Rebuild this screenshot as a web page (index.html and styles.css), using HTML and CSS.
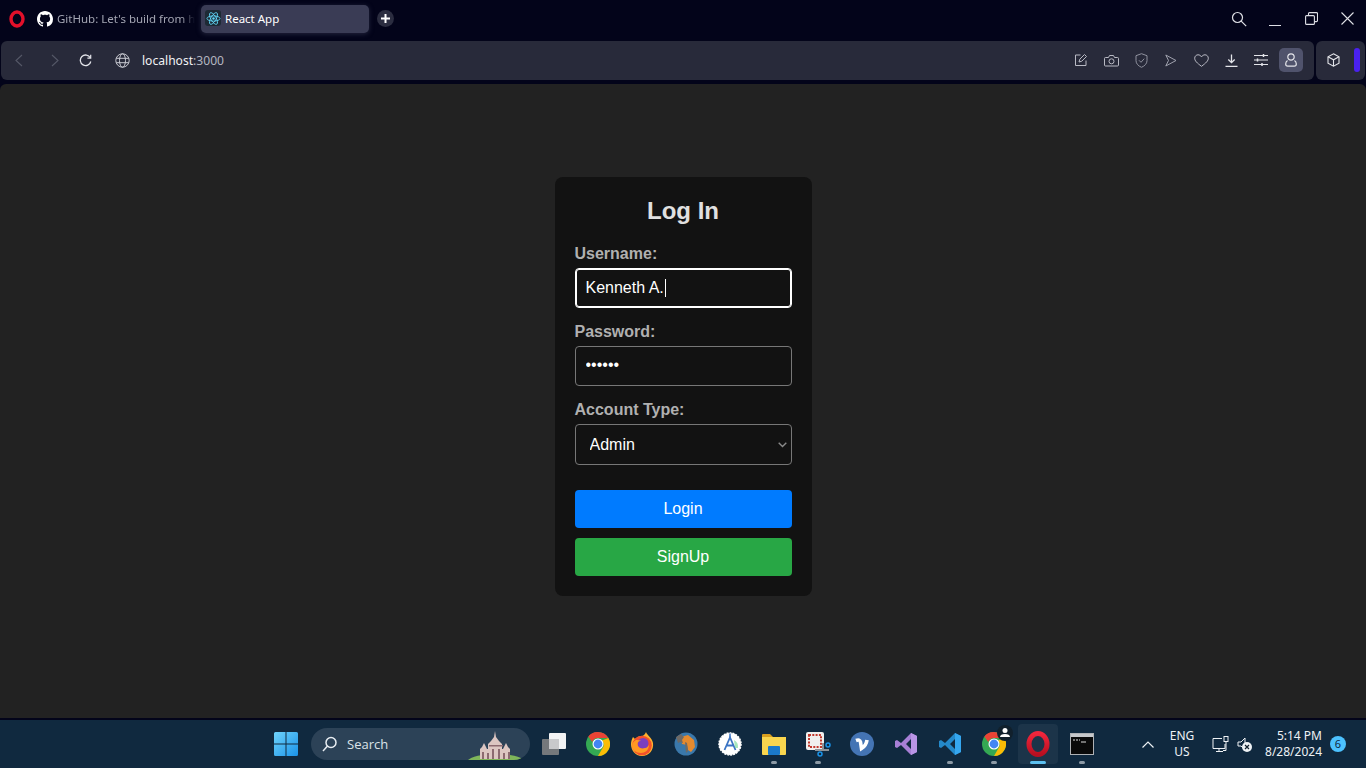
FILE: index.html
```html
<!DOCTYPE html>
<html lang="en">
<head>
  <meta charset="UTF-8">
  <meta name="viewport" content="width=device-width, initial-scale=1.0">
  <link rel="stylesheet" href="styles.css">
  <title>React App</title>
</head>
<body>
  <!-- browser tabs -->
  <div class="tabstrip">
    <svg class="opera-logo" width="18" height="18" viewBox="0 0 18 18"><ellipse cx="9" cy="9" rx="6" ry="7" fill="none" stroke="#e3102a" stroke-width="3.4"/></svg>
    <div class="tab tab-idle">
      <svg class="tab-icon" width="16" height="16" viewBox="0 0 16 16"><path fill="#fff" d="M8 0C3.58 0 0 3.58 0 8c0 3.54 2.29 6.53 5.47 7.59.4.07.55-.17.55-.38 0-.19-.01-.82-.01-1.49-2.01.37-2.53-.49-2.69-.94-.09-.23-.48-.94-.82-1.13-.28-.15-.68-.52-.01-.53.63-.01 1.08.58 1.23.82.72 1.21 1.87.87 2.33.66.07-.52.28-.87.51-1.07-1.78-.2-3.64-.89-3.64-3.95 0-.87.31-1.59.82-2.15-.08-.2-.36-1.02.08-2.12 0 0 .67-.21 2.2.82.64-.18 1.32-.27 2-.27s1.36.09 2 .27c1.53-1.04 2.2-.82 2.2-.82.44 1.1.16 1.92.08 2.12.51.56.82 1.27.82 2.15 0 3.07-1.87 3.75-3.65 3.95.29.25.54.73.54 1.48 0 1.07-.01 1.93-.01 2.2 0 .21.15.46.55.38A8.01 8.01 0 0 0 16 8c0-4.42-3.58-8-8-8z"/></svg>
      <span class="tab-title">GitHub: Let's build from he</span>
    </div>
    <div class="tab tab-active">
      <span class="tab-favicon">
        <svg width="15" height="15" viewBox="0 0 16 16" fill="none" stroke="#61dafb" stroke-width=".9"><circle cx="8" cy="8" r="1.3" fill="#61dafb" stroke="none"/><ellipse cx="8" cy="8" rx="7" ry="2.8"/><ellipse cx="8" cy="8" rx="7" ry="2.8" transform="rotate(60 8 8)"/><ellipse cx="8" cy="8" rx="7" ry="2.8" transform="rotate(120 8 8)"/></svg>
      </span>
      <span>React App</span>
    </div>
    <div class="new-tab">
      <svg width="9" height="9" viewBox="0 0 9 9"><path d="M4.5 0v9M0 4.5h9" stroke="#fff" stroke-width="2"/></svg>
    </div>
    <div class="window-btns">
      <span><svg width="16" height="16" viewBox="0 0 16 16" fill="none" stroke="#dfe0e6" stroke-width="1.2"><circle cx="6.5" cy="6.5" r="5"/><path d="M10.2 10.2l5 5"/></svg></span>
      <span><svg width="12" height="16" viewBox="0 0 12 16" stroke="#dfe0e6"><path d="M0 14.5h12"/></svg></span>
      <span><svg width="13" height="13" viewBox="0 0 13 13" fill="none" stroke="#dfe0e6" stroke-width="1.1"><rect x=".6" y="3.6" width="8.8" height="8.8" rx="1"/><path d="M3.5 3.5V1.6a1 1 0 0 1 1-1h7a1 1 0 0 1 1 1v7a1 1 0 0 1-1 1H9.500"/></svg></span>
      <span><svg width="13" height="13" viewBox="0 0 13 13" stroke="#dfe0e6" stroke-width="1.1"><path d="M.5.5l12 12M12.500.5l-12 12"/></svg></span>
    </div>
  </div>

  <!-- address bar -->
  <div class="toolbar">
    <div class="toolbar-main">
      <svg class="nav-back" width="9" height="13" viewBox="0 0 9 13" fill="none" stroke="#555867" stroke-width="1.1"><path d="M8 1L2 6.5 8 12"/></svg>
      <svg class="nav-forward" width="9" height="13" viewBox="0 0 9 13" fill="none" stroke="#555867" stroke-width="1.1"><path d="M1 1l6 5.500L1 12"/></svg>
      <svg class="nav-reload" width="13" height="13" viewBox="0 0 13 13" fill="none" stroke="#e4e5ea" stroke-width="1.3"><path d="M11.300 3.800A5.300 5.300 0 1 0 11.800 7.500"/><path d="M11.700 .8v3.300H8.400" stroke-width="1.200"/></svg>
      <svg class="nav-globe" width="15" height="15" viewBox="0 0 15 15" fill="none" stroke="#c9cad2" stroke-width="1"><circle cx="7.500" cy="7.500" r="6.700"/><ellipse cx="7.500" cy="7.500" rx="3" ry="6.700"/><path d="M1.300 5.300h12.400M1.300 9.700h12.400"/></svg>
      <span class="url">localhost<span class="url-port">:3000</span></span>
      <div class="toolbar-icons">
        <span class="tool"><svg width="14" height="14" viewBox="0 0 14 14" fill="none" stroke="#b9bac4"><path d="M6.500 2H1.500v10.500H12V7.500"/><path d="M5 9l.8-2.800L10.500 1.500l2 2L7.800 8.200z"/></svg></span>
        <span class="tool"><svg width="15" height="13" viewBox="0 0 15 13" fill="none" stroke="#b9bac4"><path d="M1.500 3.500h3L5.500 1.500h4l1 2h3a1 1 0 0 1 1 1v6.500a1 1 0 0 1-1 1h-12a1 1 0 0 1-1-1V4.500a1 1 0 0 1 1-1z"/><circle cx="7.500" cy="7.300" r="2.500"/></svg></span>
        <span class="tool"><svg width="13" height="15" viewBox="0 0 13 15" fill="none" stroke="#8f919e"><path d="M6.500 .7l5.500 2v5c0 3-2.400 5.300-5.500 6.600C3.400 13 1 10.700 1 7.700v-5z"/><path d="M4 7.300l2 2 3.200-3.600"/></svg></span>
        <span class="tool"><svg width="12" height="13" viewBox="0 0 12 13" fill="none" stroke="#a0a2ae"><path d="M.8 1L11 6.500.8 12l2.700-5.500z"/></svg></span>
        <span class="tool"><svg width="15" height="13" viewBox="0 0 15 13" fill="none" stroke="#b9bac4"><path d="M7.500 12.300C3 9 .7 6.800 .7 4.200 .7 2.200 2.300 .8 4 .8c1.500 0 2.700.8 3.500 2C8.300 1.600 9.500.8 11 .8c1.700 0 3.300 1.400 3.300 3.400 0 2.600-2.300 4.800-6.800 8.100z"/></svg></span>
        <span class="tool"><svg width="13" height="13" viewBox="0 0 13 13" fill="none" stroke="#e4e5ea" stroke-width="1.300"><path d="M6.500 .5v8M3.300 5.500l3.200 3.200 3.200-3.200M.5 12.300h12"/></svg></span>
        <span class="tool"><svg width="14" height="12" viewBox="0 0 14 12" stroke="#e4e5ea"><path d="M0 1.500h14M0 6h14M0 10.500h14"/><path d="M9.500 0v3M3.500 4.500v3M8 9v3" stroke-width="1.500"/></svg></span>
        <span class="tool-profile"><svg width="12" height="14" viewBox="0 0 12 14" fill="none" stroke="#e4e5ea" stroke-width="1.200"><circle cx="6" cy="4" r="3.200"/><path d="M2.500 7.500C1.300 8.300.7 9.500.7 11c0 1.300.8 2.200 2 2.200h6.600c1.200 0 2-.9 2-2.200 0-1.500-.6-2.700-1.800-3.500"/></svg></span>
      </div>
    </div>
    <div class="toolbar-side">
      <svg width="13" height="14" viewBox="0 0 13 14" fill="none" stroke="#e4e5ea" stroke-width="1.100"><path d="M6.500 .8l5.500 3v6.400l-5.500 3-5.500-3V3.800z"/><path d="M1 3.800l5.500 3 5.500-3M6.500 6.800v6.400"/></svg>
      <span class="side-accent"></span>
    </div>
  </div>

  <!-- page content -->
  <main class="page">
    <form class="login-card">
      <h2>Log In</h2>
      <div class="form-group">
        <label for="username">Username:</label>
        <div class="input-wrap">
          <input class="field field-focus" id="username" type="text" value="Kenneth A.">
          <span class="caret"></span>
        </div>
      </div>
      <div class="form-group">
        <label for="password">Password:</label>
        <input class="field field-password" id="password" type="password" value="secret">
      </div>
      <div class="form-group">
        <label for="accountType">Account Type:</label>
        <div class="input-wrap">
          <select class="field field-select" id="accountType">
            <option>Admin</option>
            <option>User</option>
          </select>
          <svg class="select-arrow" width="9" height="6" viewBox="0 0 9 6" fill="none" stroke="#8a8a8a" stroke-width="1.400"><path d="M.7 .8l3.800 3.800L8.300 .8"/></svg>
        </div>
      </div>
      <button class="btn btn-login" type="button">Login</button>
      <button class="btn btn-signup" type="button">SignUp</button>
    </form>
  </main>

  <!-- windows taskbar -->
  <footer class="taskbar">
    <div class="task-apps">
      <span class="task-item">
        <svg width="24" height="24" viewBox="0 0 24 24"><defs><linearGradient id="win" x1="0" y1="0" x2="1" y2="1"><stop offset="0" stop-color="#6fd3fb"/><stop offset="1" stop-color="#1a92e8"/></linearGradient></defs><path fill="url(#win)" d="M0 1.500A1.500 1.500 0 0 1 1.500 0h10v11.500H0zM12.500 0h10A1.500 1.500 0 0 1 24 1.500v10H12.500zM0 12.500h11.500V24h-10A1.500 1.500 0 0 1 0 22.500zM12.500 12.500H24v10a1.500 1.500 0 0 1-1.500 1.500h-10z"/></svg>
      </span>
      <div class="task-search">
        <svg width="15" height="16" viewBox="0 0 15 16" fill="none" stroke="#e8edf2" stroke-width="1.500"><circle cx="9" cy="6.500" r="5"/><path d="M5.500 10L1 15"/></svg>
        <span>Search</span>
        <svg class="search-art" width="56" height="30" viewBox="0 0 56 30"><path fill="#7fb65a" d="M0 30c4-3 8-4 14-5h28c6 1 10 2 14 5z"/><path fill="#dcc6c2" d="M12 29V19l2-2 2-4 2 4 1 2h1v-5l3-3 3-4 1-6 1 6 3 4 3 3v5h1l1-2 2-4 2 4 2 2v10z"/><path fill="#8c6a70" d="M14 29v-7h2v7zM19 29v-6h2v6zM24 29v-10h2v10zM30 29v-10h2v10zM35 29v-6h2v6zM40 29v-7h2v7zM21 15h14v1.500H21z"/></svg>
      </div>
      <span class="task-item">
        <svg width="26" height="24" viewBox="0 0 26 24"><rect x="8" y="1" width="17" height="16" rx="1" fill="#f2f3f4"/><rect x="1" y="7" width="17" height="16" rx="1" fill="#7b7c7e" opacity=".95"/><rect x="8" y="7" width="10" height="10" fill="#c8c9cb"/></svg>
      </span>
      <span class="task-item">
        <svg width="24" height="24" viewBox="0 0 24 24"><circle cx="12" cy="12" r="12" fill="#34a853"/><path fill="#ea4335" d="M12 0a12 12 0 0 1 10.400 6H12a6 6 0 0 0-5.700 4.100L2.300 4.400A12 12 0 0 1 12 0z"/><path fill="#fbbc05" d="M22.400 6A12 12 0 0 1 12 24l5.200-9A6 6 0 0 0 16 8.500z"/><circle cx="12" cy="12" r="5.500" fill="#fff"/><circle cx="12" cy="12" r="4.400" fill="#4285f4"/></svg>
      </span>
      <span class="task-item">
        <svg width="24" height="24" viewBox="0 0 24 24"><path fill="#ffb02e" d="M16 0c1 3 6 6 7 11 1 7-4 13-11 13S1 18 1 12c0-3 1-5 2-7l2 2c2-2 4-3 6-3 3 0 4-2 5-4z"/><circle cx="12" cy="13.500" r="9.800" fill="#f4502b"/><circle cx="13" cy="11.500" r="5.500" fill="#7b3fbf"/><path fill="#ff9a22" d="M2 14c0-3 2-5 4-6 2 0 4 0 5 1-3 0-4 2-3 5 1 2 4 3 7 2 2 0 3-2 4-3 0 5-4 8-8 8-5 0-9-3-9-7z"/></svg>
      </span>
      <span class="task-item">
        <svg width="24" height="24" viewBox="0 0 24 24"><circle cx="12" cy="12" r="11.500" fill="#3a78ab"/><path fill="#e58a2e" d="M7 5l7-2 6 5 1 7-4 5-3-2-1-5-5-1z"/><path fill="#6e6a66" d="M2 5l5-3 3 3-2 3 1 3-3-1-2 1zM11 10l2 1 1 8-2 2z"/></svg>
      </span>
      <span class="task-item">
        <svg width="24" height="24" viewBox="0 0 24 24"><circle cx="12" cy="12" r="11" fill="#fff" stroke="#fff" stroke-width="1.500" stroke-dasharray="2 1"/><path d="M12 1.500v4" stroke="#3b74c4" stroke-width="1.500"/><path fill="none" stroke="#3b74c4" stroke-width="1.800" d="M6.500 18L12 5.500 17.500 18M8.500 13.500h7"/><path fill="#7fdca0" opacity=".7" d="M16 8a8 8 0 0 1 4 8h-3z"/></svg>
      </span>
      <span class="task-item task-open">
        <svg width="26" height="24" viewBox="0 0 26 24"><path fill="#d99f1f" d="M1 3a1 1 0 0 1 1-1h7l3 3h-11z"/><path fill="#f9d54e" d="M1 5h24v17a1 1 0 0 1-1 1H2a1 1 0 0 1-1-1z"/><rect x="7" y="14" width="12" height="9" rx="1" fill="#1b79c9"/></svg>
      </span>
      <span class="task-item task-open">
        <svg width="26" height="26" viewBox="0 0 26 26"><rect x="1" y="1" width="18" height="18" rx="2" fill="#f0efee"/><rect x="4" y="4" width="12" height="12" fill="none" stroke="#c2382c" stroke-width="2" stroke-dasharray="2 1.300"/><path d="M10 19h14M18 12l0 7" stroke="#8f9296" stroke-width="2"/><circle cx="23" cy="14" r="2" fill="none" stroke="#1a92e8" stroke-width="1.500"/><circle cx="15" cy="23" r="2" fill="none" stroke="#1a92e8" stroke-width="1.500"/></svg>
      </span>
      <span class="task-item">
        <svg width="24" height="24" viewBox="0 0 24 24"><circle cx="12" cy="12" r="12" fill="#4474b4"/><path d="M6 8.500c2.500-1 4-.5 4.500 1.500l1 6.500c2.500-1.500 5-5 5.500-8.500" fill="none" stroke="#fff" stroke-width="3.600"/></svg>
      </span>
      <span class="task-item">
        <svg width="24" height="24" viewBox="0 0 24 24"><path fill="#a77fd6" d="M17 1l6 3v16l-6 3-10-10-4 3-2-1V9l2-1 4 3zM17 7l-5 5 5 5z"/><path fill="#b995e6" d="M17 1l6 3v16l-6 3z"/></svg>
      </span>
      <span class="task-item task-open">
        <svg width="24" height="24" viewBox="0 0 24 24"><path fill="#2489ca" d="M17 1l6 3v16l-6 3-10-10-4 3-2-1V9l2-1 4 3zM17 7l-5 5 5 5z"/><path fill="#35a7f0" d="M17 1l6 3v16l-6 3z"/></svg>
      </span>
      <span class="task-item task-open">
        <svg width="24" height="24" viewBox="0 0 24 24"><circle cx="12" cy="12" r="12" fill="#34a853"/><path fill="#ea4335" d="M12 0a12 12 0 0 1 10.400 6H12a6 6 0 0 0-5.700 4.100L2.300 4.400A12 12 0 0 1 12 0z"/><path fill="#fbbc05" d="M22.400 6A12 12 0 0 1 12 24l5.200-9A6 6 0 0 0 16 8.500z"/><circle cx="12" cy="12" r="5.500" fill="#fff"/><circle cx="12" cy="12" r="4.400" fill="#4285f4"/></svg>
        <svg class="profile-badge" width="16" height="16" viewBox="0 0 16 16"><circle cx="8" cy="8" r="8" fill="#11202c"/><circle cx="8" cy="5.500" r="2.500" fill="#fff"/><path fill="#fff" d="M3 12c0-2 2-3 5-3s5 1 5 3z"/></svg>
      </span>
      <span class="task-item task-current">
        <svg width="24" height="26" viewBox="0 0 24 26"><defs><linearGradient id="opera" x1="0" y1="0" x2="0" y2="1"><stop offset="0" stop-color="#f0263c"/><stop offset="1" stop-color="#b80f20"/></linearGradient></defs><ellipse cx="12" cy="13" rx="9" ry="10.500" fill="none" stroke="url(#opera)" stroke-width="5"/></svg>
      </span>
      <span class="task-item task-open">
        <svg width="24" height="22" viewBox="0 0 24 22"><rect x=".5" y=".5" width="23" height="21" fill="#0a0a0a" stroke="#aeb1b5"/><rect x="1" y="1" width="22" height="3" fill="#c6c8cb"/><path d="M3 7h2M6 7h2M9 7h1M11 9h5" stroke="#dcdcdc"/></svg>
      </span>
    </div>
    <div class="tray">
      <svg class="tray-chevron" width="12" height="7" viewBox="0 0 12 7" fill="none" stroke="#eef2f5" stroke-width="1.200"><path d="M.5 6.500L6 1l5.500 5.500"/></svg>
      <div class="tray-lang">ENG<br>US</div>
      <svg class="tray-net" width="17" height="17" viewBox="0 0 17 17" fill="none" stroke="#eef2f5"><path d="M10 2.500H1v10h12V8M4 15.500h7M7 12.500v3"/><rect x="12" y=".5" width="4" height="5"/><path d="M14 5.500v9h-3"/></svg>
      <svg class="tray-sound" width="15" height="15" viewBox="0 0 15 15"><path fill="none" stroke="#eef2f5" d="M1 5h3l4-4v6M1 5v4h3l2 2"/><circle cx="10" cy="10" r="5" fill="#eef2f5"/><path d="M8 8l4 4M12 8l-4 4" stroke="#11202c" stroke-width="1.200"/></svg>
      <div class="tray-clock">5:14 PM<br>8/28/2024</div>
      <span class="tray-badge">6</span>
    </div>
  </footer>
</body>
</html>
```

FILE: styles.css
```css
* {
  box-sizing: border-box;
}

html,
body {
  height: 100%;
}

body {
  margin: 0;
  height: 768px;
  overflow: hidden;
  display: flex;
  flex-direction: column;
  background-color: #03041a;
  font-family: 'Noto Sans', sans-serif;
  color: #fff;
}

/* tabs */
.tabstrip {
  height: 37px;
  display: flex;
  align-items: center;
  flex-shrink: 0;
  background-color: #03041a;
}

.opera-logo {
  margin-left: 8px;
}

.tab {
  display: flex;
  align-items: center;
  font-size: 11.5px;
}

.tab-idle {
  width: 158px;
  margin-left: 11px;
  gap: 4px;
  color: #a3a5b2;
  white-space: nowrap;
}

.tab-icon {
  flex-shrink: 0;
}

.tab-title {
  -webkit-mask-image: linear-gradient(to right, #000 124px, transparent 138px);
  mask-image: linear-gradient(to right, #000 124px, transparent 138px);
}

.tab-active {
  width: 168px;
  height: 28px;
  margin-left: 6px;
  margin-top: 1px;
  padding-left: 4px;
  padding-bottom: 2px;
  gap: 4px;
  border-radius: 5px;
  background-color: #3a3c55;
  box-shadow: 0 1px 5px rgba(70, 72, 100, 0.5);
  color: #fff;
}

.tab-favicon {
  width: 16px;
  height: 16px;
  display: flex;
  align-items: center;
  justify-content: center;
  background-color: #1d2a35;
  border-radius: 3px;
}

.new-tab {
  width: 17px;
  height: 17px;
  margin-left: 8px;
  display: flex;
  align-items: center;
  justify-content: center;
  border-radius: 50%;
  background-color: #2b2d40;
}

.window-btns {
  margin-left: auto;
  margin-right: 1px;
  display: flex;
  align-items: center;
}

.window-btns span {
  width: 36px;
  display: flex;
  justify-content: center;
}

/* address bar */
.toolbar {
  height: 39px;
  margin-top: 4px;
  display: flex;
  flex-shrink: 0;
  gap: 2px;
  padding: 0 1px;
}

.toolbar-main {
  flex: 1;
  display: flex;
  align-items: center;
  padding-left: 13px;
  padding-bottom: 1px;
  border-radius: 6px;
  background-color: #282a3a;
}

.nav-forward {
  margin-left: 28px;
}

.nav-reload {
  margin-left: 19px;
}

.nav-globe {
  margin-left: 23px;
}

.url {
  margin-left: 12px;
  font-size: 12.1px;
  color: #f2f2f5;
}

.url-port {
  color: #b4b6c1;
}

.toolbar-icons {
  margin-left: auto;
  margin-right: 11px;
  display: flex;
  align-items: center;
}

.tool {
  width: 30px;
  display: flex;
  justify-content: center;
}

.tool-profile {
  width: 24px;
  height: 24px;
  margin-left: 3px;
  display: flex;
  align-items: center;
  justify-content: center;
  border-radius: 5px;
  background-color: #50536c;
}

.toolbar-side {
  width: 49px;
  display: flex;
  align-items: center;
  padding-left: 11px;
  padding-bottom: 1px;
  gap: 14px;
  border-radius: 6px;
  background-color: #282a3a;
}

.side-accent {
  width: 6px;
  height: 24px;
  border-radius: 3px;
  background-color: #4a21f0;
}

/* page */
.page {
  height: 634px;
  margin: 4px 0 2px;
  padding-top: 93px;
  display: flex;
  justify-content: center;
  align-items: flex-start;
  flex-shrink: 0;
  border-radius: 6px 6px 0 0;
  background-color: #222222;
}

.login-card {
  width: 257px;
  padding: 20px;
  border-radius: 8px;
  background-color: #121212;
  font-family: 'Liberation Sans', Arial, sans-serif;
}

.login-card h2 {
  margin: 0 0 20px;
  font-size: 24px;
  line-height: 28px;
  text-align: center;
  color: #e0e0e0;
}

.form-group {
  margin-bottom: 15px;
}

.form-group label {
  display: block;
  margin-bottom: 5px;
  font-size: 16px;
  font-weight: bold;
  line-height: 18px;
  color: #b0b0b0;
}

.input-wrap {
  position: relative;
}

.field {
  display: block;
  width: 100%;
  height: 40px;
  padding: 10px;
  border: 1px solid #777;
  border-radius: 4px;
  outline: none;
  background-color: #121212;
  font-family: inherit;
  font-size: 16px;
  color: #fff;
  caret-color: transparent;
}

.field-focus {
  border-color: #fff;
  box-shadow: inset 0 0 0 1px #fff;
}

.field-password {
  padding: 8px 10px 10px;
}

.caret {
  position: absolute;
  left: 90px;
  top: 11px;
  width: 1px;
  height: 18px;
  background-color: #fff;
}

.field-select {
  height: 41px;
  padding-left: 14px;
  appearance: none;
  -webkit-appearance: none;
}

.select-arrow {
  position: absolute;
  right: 5px;
  top: 18px;
}

.btn {
  display: block;
  width: 100%;
  height: 38px;
  border: none;
  border-radius: 4px;
  font-family: inherit;
  font-size: 16px;
  color: #fff;
}

.btn-login {
  margin-top: 25px;
  background-color: #007bff;
}

.btn-signup {
  margin-top: 10px;
  background-color: #28a745;
}

/* taskbar */
.taskbar {
  height: 48px;
  flex-shrink: 0;
  position: relative;
  display: flex;
  align-items: center;
  justify-content: center;
  background-color: #10293f;
  font-family: 'Open Sans', sans-serif;
}

.task-apps {
  display: flex;
  align-items: center;
  margin-left: 2px;
}

.task-item {
  position: relative;
  width: 44px;
  height: 40px;
  display: flex;
  align-items: center;
  justify-content: center;
}

.task-open::after {
  content: "";
  position: absolute;
  left: 19px;
  bottom: 0;
  width: 6px;
  height: 3px;
  border-radius: 2px;
  background-color: #8d9aa6;
}

.task-current {
  border-radius: 4px;
  background-color: #1c3449;
  width: 40px;
  margin: 0 2px;
}

.task-current::after {
  content: "";
  position: absolute;
  left: 12px;
  bottom: 0;
  width: 16px;
  height: 3px;
  border-radius: 2px;
  background-color: #5cc0f0;
}

.profile-badge {
  position: absolute;
  right: 3px;
  top: 1px;
}

.task-search {
  width: 219px;
  height: 32px;
  margin: 0 2px 0 3px;
  padding-left: 11px;
  display: flex;
  align-items: center;
  gap: 10px;
  position: relative;
  overflow: hidden;
  border-radius: 16px;
  background-color: #2c4257;
  font-size: 13px;
  color: #dbe2e8;
}

.search-art {
  position: absolute;
  right: 6px;
  bottom: 0;
}

.tray {
  position: absolute;
  top: 0;
  right: 0;
  height: 48px;
  display: flex;
  align-items: center;
  font-family: 'Noto Sans', sans-serif;
  font-size: 12px;
  line-height: 16px;
  color: #eef2f5;
}

.tray-chevron {
  margin-right: 13px;
}

.tray-lang {
  width: 30px;
  text-align: center;
  margin-right: 15px;
}

.tray-net {
  margin-right: 8px;
}

.tray-clock {
  width: 70px;
  text-align: right;
}

.tray-badge {
  width: 16px;
  height: 16px;
  margin: 0 20px 0 8px;
  display: flex;
  align-items: center;
  justify-content: center;
  border-radius: 50%;
  background-color: #4cc2ff;
  font-size: 11px;
  color: #10293f;
}
```
